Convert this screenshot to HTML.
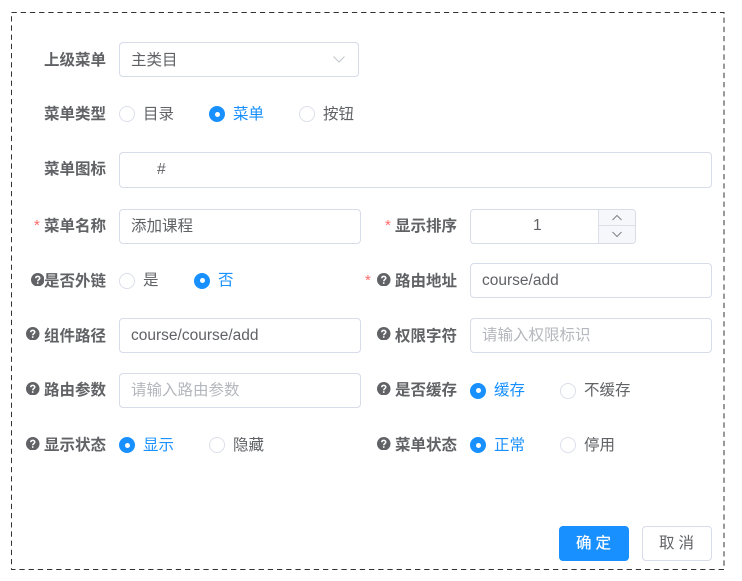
<!DOCTYPE html>
<html><head><meta charset="utf-8">
<style>
html,body{margin:0;padding:0;background:#fff;width:742px;height:581px;overflow:hidden}
body{position:relative;font-family:"Liberation Sans","Noto Sans CJK SC",sans-serif;font-size:15.5px;color:#606266}
#w{position:absolute;left:0;top:0;width:742px;height:581px;background:#fff;filter:blur(.35px)}
.a{position:absolute;white-space:nowrap;line-height:20px;margin-top:1px}
.box{position:absolute;box-sizing:border-box;border:1px solid #d8dbe8;border-radius:4px;background:#fff}
.l{font-weight:700;color:#606266}
.t{color:#606266}
.ph{color:#b4b7bd}
.on{color:#1890ff}
.r{position:absolute;box-sizing:border-box;width:16px;height:16px;border:1px solid #dcdfea;border-radius:50%;background:#fff}
.r.s{background:#1890ff;border-color:#1890ff}
.r.s:after{content:"";position:absolute;left:4.5px;top:4.5px;width:5px;height:5px;border-radius:50%;background:#fff}
.star{color:#ff6b6b;font-size:15px}
svg{position:absolute}
</style></head><body><div id="w">
<svg style="left:0;top:0" width="742" height="581"><rect x="11.5" y="12.5" width="712.5" height="557" fill="none" stroke="#333" stroke-width="1" stroke-dasharray="5.3 3.9"/></svg>

<div class="a l" style="left:44px;top:50px">上级菜单</div>
<div class="box" style="left:119px;top:42px;width:240px;height:35px"></div>
<div class="a t" style="left:131px;top:50px">主类目</div>
<svg style="left:332px;top:55px" width="14" height="9" viewBox="0 0 14 9"><path d="M1.5 1.5L7 7l5.5-5.5" fill="none" stroke="#c0c4cc" stroke-width="1"/></svg>

<div class="a l" style="left:44px;top:104px">菜单类型</div>
<div class="r" style="left:119px;top:106px"></div><div class="a t" style="left:143px;top:104px">目录</div>
<div class="r s" style="left:209px;top:106px"></div><div class="a on" style="left:233px;top:104px">菜单</div>
<div class="r" style="left:299px;top:106px"></div><div class="a t" style="left:323px;top:104px">按钮</div>

<div class="a l" style="left:44px;top:159px">菜单图标</div>
<div class="box" style="left:119px;top:152px;width:593px;height:36px"></div>
<div class="a t" style="left:157px;top:159px">#</div>

<div class="a star" style="left:34px;top:215px">*</div>
<div class="a l" style="left:44px;top:216px">菜单名称</div>
<div class="box" style="left:119px;top:209px;width:242px;height:35px"></div>
<div class="a t" style="left:131px;top:216px">添加课程</div>

<div class="a star" style="left:385px;top:215px">*</div>
<div class="a l" style="left:395px;top:216px">显示排序</div>
<div class="box" style="left:470px;top:209px;width:166px;height:35px"></div>
<div style="position:absolute;left:598px;top:210px;width:37px;height:33px;background:#f5f7fa;border-left:1px solid #dcdfe6;box-sizing:border-box;border-radius:0 3px 3px 0"></div>
<div style="position:absolute;left:598px;top:225px;width:37px;height:1px;background:#dcdfe6"></div>
<div class="a t" style="left:533px;top:215px">1</div>
<svg style="left:611px;top:214px" width="12" height="8" viewBox="0 0 12 8"><path d="M1.5 6L6 1.5 10.5 6" fill="none" stroke="#808388" stroke-width="1"/></svg>
<svg style="left:611px;top:230px" width="12" height="8" viewBox="0 0 12 8"><path d="M1.5 2L6 6.5 10.5 2" fill="none" stroke="#808388" stroke-width="1"/></svg>

<svg style="left:30.5px;top:272.5px" width="13.5" height="13.5" viewBox="0 0 14 14"><circle cx="7" cy="7" r="7" fill="#606266"/><path d="M4.9 5.4C5 4.1 5.9 3.5 7 3.5c1.2 0 2.1.7 2.1 1.8 0 1.6-2.1 1.6-2.1 3.2" fill="none" stroke="#fff" stroke-width="1.6"/><circle cx="7" cy="10.4" r=".95" fill="#fff"/></svg>
<div class="a l" style="left:44px;top:271px">是否外链</div>
<div class="r" style="left:119px;top:272.5px"></div><div class="a t" style="left:143px;top:270px">是</div>
<div class="r s" style="left:194px;top:272.5px"></div><div class="a on" style="left:218px;top:270px">否</div>

<div class="a star" style="left:365px;top:270px">*</div>
<svg style="left:377px;top:272.5px" width="13.5" height="13.5" viewBox="0 0 14 14"><circle cx="7" cy="7" r="7" fill="#606266"/><path d="M4.9 5.4C5 4.1 5.9 3.5 7 3.5c1.2 0 2.1.7 2.1 1.8 0 1.6-2.1 1.6-2.1 3.2" fill="none" stroke="#fff" stroke-width="1.6"/><circle cx="7" cy="10.4" r=".95" fill="#fff"/></svg>
<div class="a l" style="left:395px;top:271px">路由地址</div>
<div class="box" style="left:470px;top:263px;width:242px;height:35px"></div>
<div class="a t" style="left:482px;top:270px">course/add</div>

<svg style="left:26px;top:326.5px" width="13.5" height="13.5" viewBox="0 0 14 14"><circle cx="7" cy="7" r="7" fill="#606266"/><path d="M4.9 5.4C5 4.1 5.9 3.5 7 3.5c1.2 0 2.1.7 2.1 1.8 0 1.6-2.1 1.6-2.1 3.2" fill="none" stroke="#fff" stroke-width="1.6"/><circle cx="7" cy="10.4" r=".95" fill="#fff"/></svg>
<div class="a l" style="left:44px;top:326px">组件路径</div>
<div class="box" style="left:119px;top:318px;width:242px;height:35px"></div>
<div class="a t" style="left:131px;top:325px">course/course/add</div>

<svg style="left:377px;top:326.5px" width="13.5" height="13.5" viewBox="0 0 14 14"><circle cx="7" cy="7" r="7" fill="#606266"/><path d="M4.9 5.4C5 4.1 5.9 3.5 7 3.5c1.2 0 2.1.7 2.1 1.8 0 1.6-2.1 1.6-2.1 3.2" fill="none" stroke="#fff" stroke-width="1.6"/><circle cx="7" cy="10.4" r=".95" fill="#fff"/></svg>
<div class="a l" style="left:395px;top:326px">权限字符</div>
<div class="box" style="left:470px;top:318px;width:242px;height:35px"></div>
<div class="a ph" style="left:482px;top:325px">请输入权限标识</div>

<svg style="left:26px;top:381.5px" width="13.5" height="13.5" viewBox="0 0 14 14"><circle cx="7" cy="7" r="7" fill="#606266"/><path d="M4.9 5.4C5 4.1 5.9 3.5 7 3.5c1.2 0 2.1.7 2.1 1.8 0 1.6-2.1 1.6-2.1 3.2" fill="none" stroke="#fff" stroke-width="1.6"/><circle cx="7" cy="10.4" r=".95" fill="#fff"/></svg>
<div class="a l" style="left:44px;top:380px">路由参数</div>
<div class="box" style="left:119px;top:373px;width:242px;height:35px"></div>
<div class="a ph" style="left:131px;top:380px">请输入路由参数</div>

<svg style="left:377px;top:381.5px" width="13.5" height="13.5" viewBox="0 0 14 14"><circle cx="7" cy="7" r="7" fill="#606266"/><path d="M4.9 5.4C5 4.1 5.9 3.5 7 3.5c1.2 0 2.1.7 2.1 1.8 0 1.6-2.1 1.6-2.1 3.2" fill="none" stroke="#fff" stroke-width="1.6"/><circle cx="7" cy="10.4" r=".95" fill="#fff"/></svg>
<div class="a l" style="left:395px;top:380px">是否缓存</div>
<div class="r s" style="left:470px;top:382.5px"></div><div class="a on" style="left:494px;top:380px">缓存</div>
<div class="r" style="left:560px;top:382.5px"></div><div class="a t" style="left:584px;top:380px">不缓存</div>

<svg style="left:26px;top:436.5px" width="13.5" height="13.5" viewBox="0 0 14 14"><circle cx="7" cy="7" r="7" fill="#606266"/><path d="M4.9 5.4C5 4.1 5.9 3.5 7 3.5c1.2 0 2.1.7 2.1 1.8 0 1.6-2.1 1.6-2.1 3.2" fill="none" stroke="#fff" stroke-width="1.6"/><circle cx="7" cy="10.4" r=".95" fill="#fff"/></svg>
<div class="a l" style="left:44px;top:435px">显示状态</div>
<div class="r s" style="left:119px;top:437px"></div><div class="a on" style="left:143px;top:435px">显示</div>
<div class="r" style="left:209px;top:437px"></div><div class="a t" style="left:233px;top:435px">隐藏</div>

<svg style="left:377px;top:436.5px" width="13.5" height="13.5" viewBox="0 0 14 14"><circle cx="7" cy="7" r="7" fill="#606266"/><path d="M4.9 5.4C5 4.1 5.9 3.5 7 3.5c1.2 0 2.1.7 2.1 1.8 0 1.6-2.1 1.6-2.1 3.2" fill="none" stroke="#fff" stroke-width="1.6"/><circle cx="7" cy="10.4" r=".95" fill="#fff"/></svg>
<div class="a l" style="left:395px;top:435px">菜单状态</div>
<div class="r s" style="left:470px;top:437px"></div><div class="a on" style="left:494px;top:435px">正常</div>
<div class="r" style="left:560px;top:437px"></div><div class="a t" style="left:584px;top:435px">停用</div>

<div class="box" style="left:559px;top:526px;width:70px;height:35px;background:#1890ff;border-color:#1890ff"></div>
<div class="a" style="left:576px;top:533px;color:#fff;letter-spacing:4px;text-shadow:0 0 .6px #fff">确定</div>
<div class="box" style="left:642px;top:526px;width:70px;height:35px"></div>
<div class="a t" style="left:659px;top:533px;letter-spacing:4px">取消</div>
</div></body></html>
